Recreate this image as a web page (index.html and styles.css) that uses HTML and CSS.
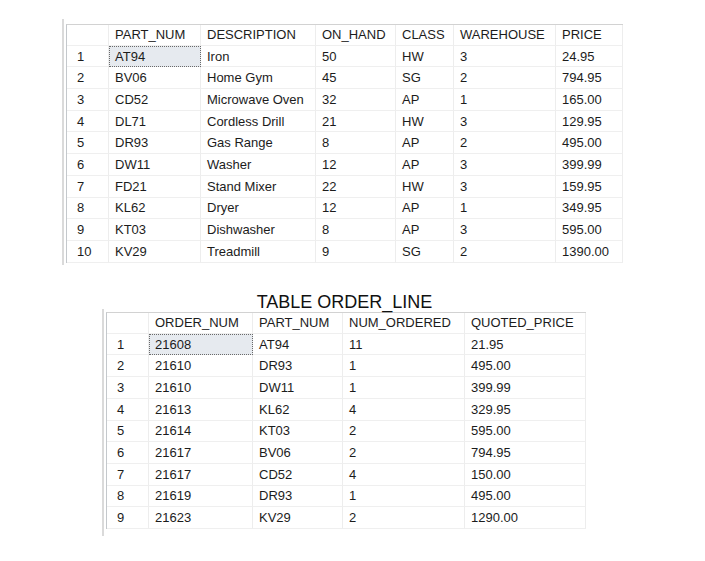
FILE: index.html
```html
<!DOCTYPE html>
<html>
<head>
<meta charset="utf-8">
<link rel="stylesheet" href="styles.css">
</head>
<body>
<div class="page">
  <div class="frame frame-part">
    <div class="grid grid-part">
      <div class="c rn"></div><div class="c">PART_NUM</div><div class="c">DESCRIPTION</div><div class="c">ON_HAND</div><div class="c">CLASS</div><div class="c">WAREHOUSE</div><div class="c">PRICE</div>
      <div class="c rn">1</div><div class="c sel">AT94</div><div class="c">Iron</div><div class="c">50</div><div class="c">HW</div><div class="c">3</div><div class="c">24.95</div>
      <div class="c rn">2</div><div class="c">BV06</div><div class="c">Home Gym</div><div class="c">45</div><div class="c">SG</div><div class="c">2</div><div class="c">794.95</div>
      <div class="c rn">3</div><div class="c">CD52</div><div class="c">Microwave Oven</div><div class="c">32</div><div class="c">AP</div><div class="c">1</div><div class="c">165.00</div>
      <div class="c rn">4</div><div class="c">DL71</div><div class="c">Cordless Drill</div><div class="c">21</div><div class="c">HW</div><div class="c">3</div><div class="c">129.95</div>
      <div class="c rn">5</div><div class="c">DR93</div><div class="c">Gas Range</div><div class="c">8</div><div class="c">AP</div><div class="c">2</div><div class="c">495.00</div>
      <div class="c rn">6</div><div class="c">DW11</div><div class="c">Washer</div><div class="c">12</div><div class="c">AP</div><div class="c">3</div><div class="c">399.99</div>
      <div class="c rn">7</div><div class="c">FD21</div><div class="c">Stand Mixer</div><div class="c">22</div><div class="c">HW</div><div class="c">3</div><div class="c">159.95</div>
      <div class="c rn">8</div><div class="c">KL62</div><div class="c">Dryer</div><div class="c">12</div><div class="c">AP</div><div class="c">1</div><div class="c">349.95</div>
      <div class="c rn">9</div><div class="c">KT03</div><div class="c">Dishwasher</div><div class="c">8</div><div class="c">AP</div><div class="c">3</div><div class="c">595.00</div>
      <div class="c rn">10</div><div class="c">KV29</div><div class="c">Treadmill</div><div class="c">9</div><div class="c">SG</div><div class="c">2</div><div class="c">1390.00</div>
    </div>
  </div>

  <div class="order">
    <div class="title">TABLE ORDER_LINE</div>
    <div class="frame frame-order">
      <div class="grid grid-order">
        <div class="c rn"></div><div class="c">ORDER_NUM</div><div class="c">PART_NUM</div><div class="c">NUM_ORDERED</div><div class="c">QUOTED_PRICE</div>
        <div class="c rn">1</div><div class="c sel">21608</div><div class="c">AT94</div><div class="c">11</div><div class="c">21.95</div>
        <div class="c rn">2</div><div class="c">21610</div><div class="c">DR93</div><div class="c">1</div><div class="c">495.00</div>
        <div class="c rn">3</div><div class="c">21610</div><div class="c">DW11</div><div class="c">1</div><div class="c">399.99</div>
        <div class="c rn">4</div><div class="c">21613</div><div class="c">KL62</div><div class="c">4</div><div class="c">329.95</div>
        <div class="c rn">5</div><div class="c">21614</div><div class="c">KT03</div><div class="c">2</div><div class="c">595.00</div>
        <div class="c rn">6</div><div class="c">21617</div><div class="c">BV06</div><div class="c">2</div><div class="c">794.95</div>
        <div class="c rn">7</div><div class="c">21617</div><div class="c">CD52</div><div class="c">4</div><div class="c">150.00</div>
        <div class="c rn">8</div><div class="c">21619</div><div class="c">DR93</div><div class="c">1</div><div class="c">495.00</div>
        <div class="c rn">9</div><div class="c">21623</div><div class="c">KV29</div><div class="c">2</div><div class="c">1290.00</div>
      </div>
    </div>
  </div>
</div>
</body>
</html>
```

FILE: styles.css
```css
html, body {
  margin: 0;
  padding: 0;
  background: #ffffff;
}

.page {
  padding-top: 19px;
  font-family: "Liberation Sans", Arial, sans-serif;
  font-size: 13px;
  color: #1c1c1c;
}

.frame {
  border-left: 2px solid #dadada;
  padding-left: 2px;
  width: fit-content;
}

.frame-part {
  margin-left: 62px;
  padding-top: 5px;
  padding-bottom: 2px;
}

.frame-order {
  padding-top: 3.5px;
  padding-bottom: 7px;
}

.grid {
  display: grid;
  border-left: 1px solid #c4c8cc;
  border-top: 1px solid #d2d2d2;
  grid-auto-rows: 21.7px;
  grid-template-rows: 20.7px;
}

.grid-part {
  grid-template-columns: 42px 92px 115px 80px 58px 102px 67px;
}

.grid-order {
  grid-template-columns: 42px 104px 90px 122px 121px;
}

.c {
  box-sizing: border-box;
  border-right: 1px solid #ededed;
  border-bottom: 1px solid #efefef;
  padding-left: 6px;
  display: flex;
  align-items: center;
  white-space: nowrap;
  overflow: hidden;
}

.c.rn {
  padding-left: 10px;
}

.c.sel {
  background: #e6eaef;
  border: 1px dotted #6a6a6a;
  padding-left: 5px;
}

.order {
  margin-left: 102px;
  margin-top: 30px;
  width: fit-content;
}

.title {
  font-size: 18px;
  line-height: 14px;
  height: 14px;
  text-align: center;
  color: #111111;
  padding-left: 1px;
}
```
